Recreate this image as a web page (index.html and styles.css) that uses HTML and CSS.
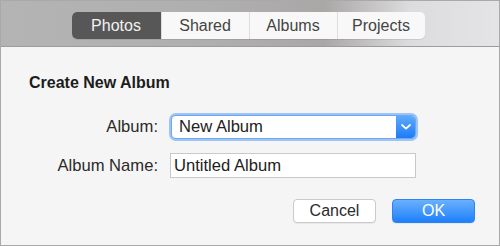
FILE: index.html
```html
<!DOCTYPE html>
<html lang="en">
<head>
    <meta charset="UTF-8">
    <title>Create New Album</title>
    <link rel="stylesheet" href="styles.css">
</head>
<body>
    <div class="window">
        <div class="toolbar">
            <div class="segments">
                <span class="segment active">Photos</span>
                <span class="segment">Shared</span>
                <span class="segment">Albums</span>
                <span class="segment">Projects</span>
            </div>
        </div>

        <div class="sheet">
            <h1 class="title">Create New Album</h1>

            <div class="form">
                <label class="label">Album:</label>
                <div class="select">
                    <span class="select-value">New Album</span>
                    <span class="select-arrow">
                        <svg width="10" height="6" viewBox="0 0 10 6">
                            <path d="M1 1 L5 4.6 L9 1" fill="none" stroke="#fff" stroke-width="1.8" stroke-linecap="round" stroke-linejoin="round"/>
                        </svg>
                    </span>
                </div>

                <label class="label">Album Name:</label>
                <div class="text-field">Untitled Album</div>
            </div>

            <div class="buttons">
                <button class="btn">Cancel</button>
                <button class="btn primary">OK</button>
            </div>
        </div>
    </div>
</body>
</html>
```

FILE: styles.css
```css
* {
    margin: 0;
    padding: 0;
    box-sizing: border-box;
}

body {
    font-family: 'Liberation Sans', Arial, sans-serif;
    background: #f5f5f5;
    color: #222;
}

.window {
    width: 500px;
    height: 246px;
    border: 1px solid #a9a9a9;
    background: #f5f5f5;
    overflow: hidden;
}

.toolbar {
    height: 46px;
    padding-top: 11px;
    padding-right: 4px;
    display: flex;
    justify-content: center;
    align-items: flex-start;
    background: linear-gradient(90deg, #b5b4b5 0%, #b0afb0 40%, #aaa7a7 65%, #dcdbdd 82%, #e4e3e5 100%);
    border-bottom: 1px solid #9c9c9c;
}

.segments {
    display: flex;
    height: 27px;
    border-radius: 5px;
    overflow: hidden;
    background: #f8f8f8;
    box-shadow: 0 1px 0 rgba(0, 0, 0, 0.08);
}

.segment {
    display: flex;
    align-items: center;
    justify-content: center;
    width: 88px;
    font-size: 16px;
    color: #444;
    border-left: 1px solid #dedede;
}

.segment:first-child {
    width: 89px;
    border-left: none;
}

.segment.active {
    background: #575757;
    color: #f2f2f2;
}

.sheet {
    padding: 27px 24px 0 28px;
}

.title {
    font-size: 16px;
    line-height: 18px;
    font-weight: bold;
    color: #1c1c1c;
}

.form {
    display: grid;
    grid-template-columns: 129px 249px;
    column-gap: 11px;
    row-gap: 12px;
    align-items: center;
    margin-top: 21px;
}

.label {
    text-align: right;
    font-size: 16.6px;
    color: #2a2a2a;
}

.select {
    display: flex;
    height: 22px;
    width: 243px;
    margin: 3px;
    background: #fff;
    border-radius: 4px;
    box-shadow: 0 0 0 1px #6ea6ef, 0 0 0 3px #9cc4f6;
}

.select-value {
    flex: 1;
    font-size: 16.6px;
    line-height: 22px;
    padding-left: 7px;
    color: #222;
}

.select-arrow {
    width: 19px;
    display: flex;
    align-items: center;
    justify-content: center;
    background: linear-gradient(#5eaafc, #1c7cf8);
    border-radius: 0 4px 4px 0;
}

.text-field {
    width: 246px;
    height: 25px;
    margin-left: 1px;
    background: #fff;
    border: 1px solid #c9c9c9;
    font-size: 16.6px;
    line-height: 23px;
    padding-left: 3px;
    color: #1c1c1c;
}

.buttons {
    display: flex;
    justify-content: flex-end;
    gap: 16px;
    margin-top: 21px;
}

.btn {
    width: 83px;
    height: 24px;
    font-family: inherit;
    font-size: 16px;
    color: #2a2a2a;
    background: #fff;
    border: 1px solid #cacaca;
    border-radius: 4px;
    box-shadow: 0 1px 0 rgba(0, 0, 0, 0.05);
}

.btn.primary {
    color: #fff;
    border: 1px solid #2a84f5;
    background: linear-gradient(#6bb1fd, #1e80fb);
}
```
